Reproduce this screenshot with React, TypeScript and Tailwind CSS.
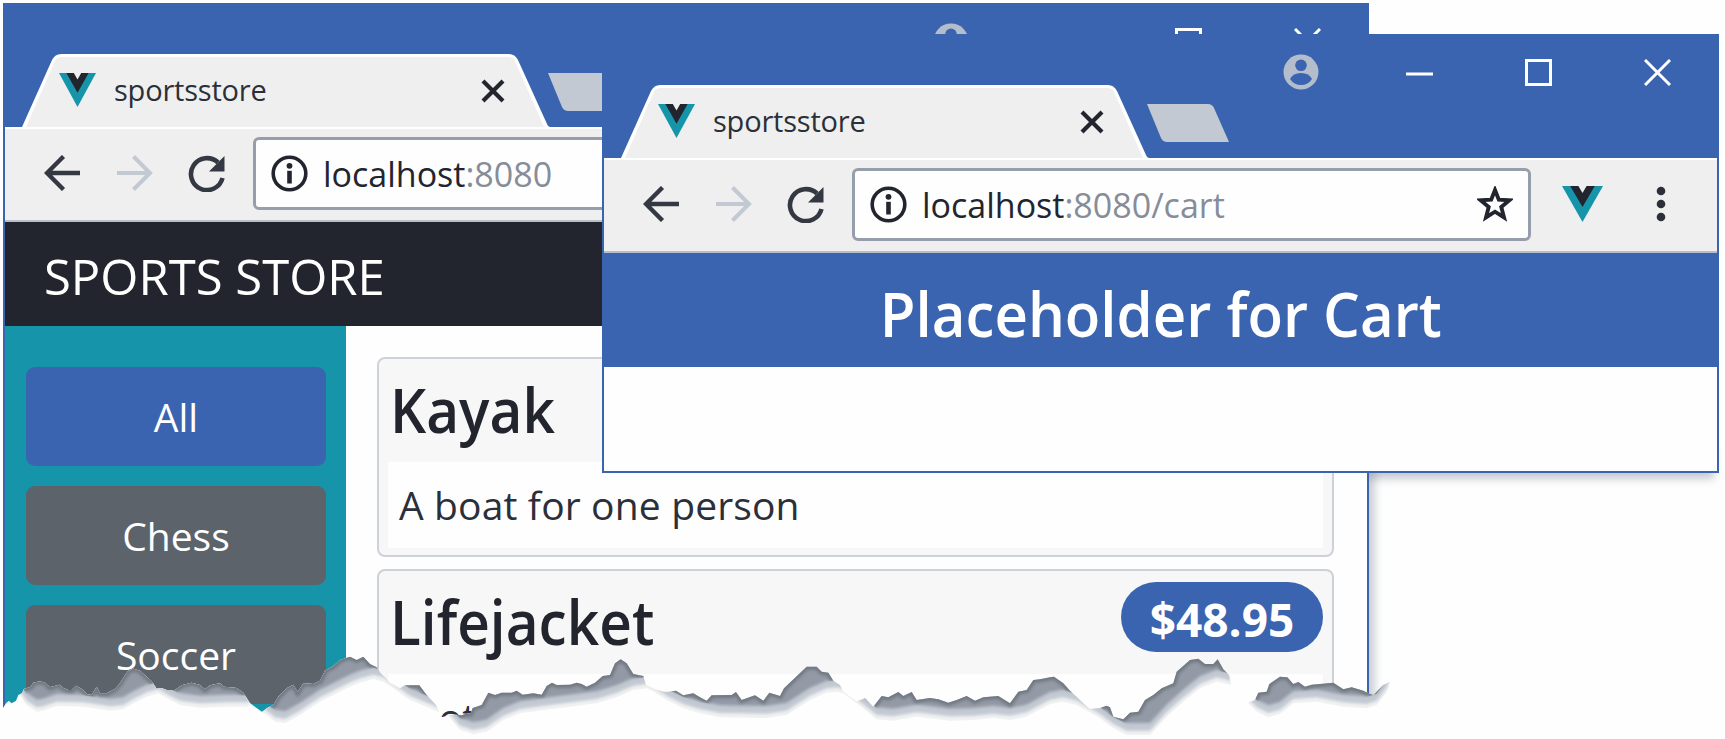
import type { ReactNode } from "react";

function VueLogo({ className }: { className: string }) {
  return (
    <svg viewBox="0 0 40 36" preserveAspectRatio="none" className={className}>
      <path d="M0 0H40L20 36Z" fill="#1594aa" />
      <path d="M8 0H32L20 21Z" fill="#22252e" />
      <path d="M16 0H24L20 7Z" fill="#efefef" />
    </svg>
  );
}

function CloseIcon() {
  return (
    <svg viewBox="0 0 24 24" className="h-6 w-6" stroke="#22252e" strokeWidth="4.2">
      <path d="M2 2L22 22M22 2L2 22" />
    </svg>
  );
}

function BackIcon() {
  return (
    <svg viewBox="0 0 36 36" className="h-9 w-9 shrink-0" fill="none" stroke="#343842" strokeWidth="4.4">
      <path d="M36 18H3M19.500 1.500L3 18L19.500 34.500" />
    </svg>
  );
}

function ForwardIcon() {
  return (
    <svg viewBox="0 0 36 36" className="ml-[37px] h-9 w-9 shrink-0" fill="none" stroke="#c3c9d2" strokeWidth="4">
      <path d="M0 18H33M16.500 1.500L33 18L16.500 34.500" />
    </svg>
  );
}

function ReloadIcon() {
  return (
    <svg viewBox="0 0 37 37" className="ml-[35px] h-[37px] w-[37px] shrink-0" fill="none">
      <path d="M34.500 23A16 16 0 1 1 30 7.500" stroke="#343842" strokeWidth="4.600" />
      <path d="M36.500 1V16.500H21Z" fill="#343842" />
    </svg>
  );
}

function InfoIcon() {
  return (
    <svg viewBox="0 0 37 37" className="h-[37px] w-[37px] shrink-0">
      <circle cx="18.500" cy="18.500" r="16.300" fill="none" stroke="#22252e" strokeWidth="3.600" />
      <circle cx="18.500" cy="10.800" r="2.900" fill="#22252e" />
      <path d="M18.500 15.800V28.500" stroke="#22252e" strokeWidth="4.600" />
    </svg>
  );
}

function WindowButtons() {
  return (
    <div className="ml-auto mr-[46px] flex h-[72px] items-center">
      <svg viewBox="0 0 36 36" className="h-9 w-9">
        <circle cx="18" cy="18" r="17.500" fill="#b4bdcb" />
        <circle cx="18" cy="11.300" r="5.800" fill="#3a64b0" />
        <path d="M7 25Q10 19 18 19T29 25Q25 31 18 31T7 25Z" fill="#3a64b0" />
      </svg>
      <svg viewBox="0 0 27 27" className="ml-[87px] h-[27px] w-[27px]">
        <path d="M0 15H27" stroke="#fff" strokeWidth="3" />
      </svg>
      <svg viewBox="0 0 27 27" className="ml-[92px] h-[27px] w-[27px]">
        <rect x="1.500" y="1.500" width="24" height="24" fill="none" stroke="#fff" strokeWidth="3" />
      </svg>
      <svg viewBox="0 0 27 27" className="ml-[92px] h-[27px] w-[27px]">
        <path d="M1 1L26 26M26 1L1 26" stroke="#fff" strokeWidth="3" />
      </svg>
    </div>
  );
}

function TitleBar() {
  return (
    <div className="flex h-[122px] shrink-0 bg-[#3a64b0]">
      <div className="relative ml-[17px] mt-[49px] flex h-[73px] w-[528px] shrink-0 items-center">
        <svg viewBox="0 0 528 73" className="absolute inset-0 h-full w-full">
          <path d="M0 73L30 6Q33 0 39 0H487Q493 0 496 6L525 70Q526 73 528 73Z" fill="#fff" />
          <path d="M4 73L33 7Q35 3 40 3H486Q491 3 493 7L522 73Z" fill="#efefef" />
        </svg>
        <VueLogo className="relative mb-0.5 ml-[37px] h-[34px] w-[37px]" />
        <span className="relative mb-[3px] ml-[18px] text-[29px] leading-none tracking-[-0.2px] text-[#2b2f39]">
          sportsstore
        </span>
        <div className="relative ml-auto mr-[45px]">
          <CloseIcon />
        </div>
      </div>
      <svg viewBox="0 0 82 38" className="-ml-0.5 mt-[68px] h-[38px] w-[82px] shrink-0">
        <path d="M0 0H61Q65 0 67 4L82 38H20Q16 38 14 34Z" fill="#c3c9d2" />
      </svg>
      <WindowButtons />
    </div>
  );
}

function Toolbar({ path, full }: { path: string; full?: boolean }) {
  return (
    <div className="flex h-[95px] shrink-0 items-center border-b-2 border-t-2 border-b-[#b9bfc9] border-t-white bg-[#efefef] pb-[3px] pl-[39px]">
      <BackIcon />
      <ForwardIcon />
      <ReloadIcon />
      <div className="ml-[28px] flex h-[73px] flex-1 items-center rounded-md border-[3px] border-[#979eab] bg-[#fefefe] px-[15px]">
        <InfoIcon />
        <span className="ml-[15px] pt-0.5 text-[34px] leading-none text-[#868d99]">
          <span className="text-[#22252e]">localhost</span>
          {path}
        </span>
        {full && (
          <svg viewBox="0 0 36 36" className="ml-auto h-9 w-9">
            <path
              d="M18 4L21.800 13.600L32.500 14.200L24.300 21L27 31.500L18 25.700L9 31.500L11.700 21L3.500 14.200L14.200 13.600Z"
              fill="none"
              stroke="#22252e"
              strokeWidth="3.900"
            />
          </svg>
        )}
      </div>
      {full && (
        <>
          <VueLogo className="ml-[31px] h-9 w-[41px]" />
          <svg viewBox="0 0 10 36" className="ml-[53px] mr-[51px] h-9 w-[10px]" fill="#2b2f39">
            <circle cx="5" cy="5" r="4.300" />
            <circle cx="5" cy="18" r="4.300" />
            <circle cx="5" cy="31" r="4.300" />
          </svg>
        </>
      )}
    </div>
  );
}

function CategoryButton({ label, active }: { label: string; active?: boolean }) {
  return (
    <button
      className={`h-[99px] shrink-0 rounded-[9px] text-[39px] leading-none text-white ${
        active ? "bg-[#3a64b0]" : "bg-[#5c636b]"
      }`}
    >
      {label}
    </button>
  );
}

function ProductCard({ name, price, children }: { name: string; price?: string; children: ReactNode }) {
  return (
    <div className="h-[200px] shrink-0 rounded-lg border-2 border-[#cdd1d8] bg-[#f7f7f7] px-[9px]">
      <div className="flex h-[103px] items-start justify-between pl-[2px]">
        <h4 className="mt-[16px] origin-left scale-x-[0.93] text-[61px] font-semibold leading-[70px] text-[#22252e]">
          {name}
        </h4>
        {price && (
          <span className="mt-[11px] flex h-[70px] w-[202px] items-center justify-center rounded-full bg-[#3a64b0] pt-1 text-[46px] font-bold text-white">
            {price}
          </span>
        )}
      </div>
      <div className="flex h-[86px] items-center bg-[#fefefe] pl-[11px] text-[39px] tracking-[0.15px] text-[#2b2f39]">
        {children}
      </div>
    </div>
  );
}

const TEAR =
  "9,204 18,190 27,182 34,190 42,186 48,182 55,165 66,160 72,147 92,140 100,128 120,124 135,128 150,142 178,134 190,144 205,150 215,150 228,137 245,147 262,163 275,165 290,140 300,160 320,160 345,147 360,130 372,110 385,92 400,86 420,92 435,106 455,124 470,146 484,144 500,150 525,150 545,136 575,128 598,134 615,148 630,136 660,130 672,140 710,144 730,158 750,190 786,216 800,205 820,195 835,170 860,145 880,134 893,156 910,130 940,132 960,122 975,92 1000,78 1020,60 1050,50 1070,60 1090,50 1110,72 1130,82 1142,100 1158,115 1170,128 1200,145 1215,136 1258,136 1280,165 1308,195 1325,232 1338,228 1350,224 1365,224 1385,226 1396,222 1412,220 1418,204 1445,195 1465,158 1485,165 1505,158 1535,158 1550,152 1568,164 1600,160 1625,164 1640,138 1656,128 1670,135 1710,134 1730,128 1745,132 1760,140 1785,128 1808,108 1830,105 1845,70 1862,58 1880,70 1900,102 1930,108 1938,135 1962,146 1990,155 2005,155 2028,152 2050,166 2080,160 2100,172 2120,182 2135,166 2195,165 2208,156 2225,180 2265,166 2290,182 2308,158 2340,168 2352,145 2420,80 2450,80 2465,95 2485,98 2500,122 2520,135 2530,155 2570,184 2595,175 2620,200 2645,168 2665,172 2695,156 2710,168 2735,156 2750,180 2790,174 2815,178 2845,188 2870,180 2900,168 2925,182 2950,172 2995,168 3030,190 3055,155 3080,150 3100,120 3120,118 3150,112 3162,110 3190,130 3210,152 3230,170 3250,190 3270,207 3300,204 3320,197 3330,202 3340,230 3370,238 3390,218 3415,215 3435,180 3460,165 3485,145 3520,130 3530,95 3570,60 3595,56 3615,72 3640,72 3653,58 3670,88 3687,105 3693,130 3743,188 3765,180 3775,158 3800,155 3808,132 3840,110 3862,112 3880,132 3895,126 3915,140 3935,134 4000,128 4030,148 4055,142 4090,152 4102,158 4120,165 4150,135 4170,125";

const SHADOW =
  "62,0 60,165 80,195 110,215 130,212 170,198 250,200 330,212 370,208 400,190 440,170 475,160 500,175 540,195 600,203 680,200 740,200 752,195 786,216 800,225 825,245 855,250 900,225 960,185 1050,140 1080,128 1120,117 1150,125 1180,145 1230,180 1290,205 1320,218 1345,228 1380,270 1420,283 1460,275 1510,240 1560,220 1650,208 1790,190 1850,172 1900,150 1940,145 1962,155 2000,180 2050,205 2100,220 2160,232 2230,233 2300,234 2360,225 2430,180 2480,158 2510,155 2530,160 2570,190 2630,238 2680,242 2750,230 2850,242 2920,240 2980,234 3030,240 3080,230 3150,192 3190,185 3230,195 3300,235 3340,265 3380,285 3450,285 3500,230 3550,185 3600,145 3650,125 3693,135 3695,0 3740,0 3745,190 3770,215 3805,232 3840,222 3880,190 3950,185 4030,200 4100,205 4130,195 4160,155 4170,125 4170,0";

function TornEdge() {
  return (
    <svg viewBox="0 0 5175 297" className="absolute left-0 top-[640px] z-30 h-[99px] w-[1725px]">
      <defs>
        <clipPath id="paper">
          <polygon points={`${TEAR} 4170,300 9,300`} />
        </clipPath>
        <clipPath id="core">
          <polygon points={SHADOW} transform="translate(0 -34)" />
        </clipPath>
        <filter id="soft" x="-5%" y="-20%" width="110%" height="140%">
          <feGaussianBlur stdDeviation="5" />
        </filter>
      </defs>
      <polygon points={`0,204 ${TEAR} 4200,125 4200,300 0,300`} fill="#fefefe" />
      <g clipPath="url(#paper)">
        <polygon points={SHADOW} fill="#f0f1f2" />
        <g filter="url(#soft)">
          <polygon points={SHADOW} fill="#c3c9d2" transform="translate(0 -13)" />
          <polygon points={SHADOW} fill="#939aa6" transform="translate(0 -36)" />
        </g>
        <g clipPath="url(#core)">
          <polyline points={TEAR} fill="none" stroke="#5c636b" strokeWidth="18" opacity="0.6" filter="url(#soft)" />
        </g>
      </g>
    </svg>
  );
}

export default function App() {
  return (
    <div className="relative h-[739px] w-[1725px] overflow-hidden bg-[#fefefe] font-['Open_Sans','Noto_Sans',sans-serif]">
      <div className="absolute left-[1340px] top-[440px] h-[32px] w-[374px] shadow-[0_7px_8px_rgba(130,140,155,0.45)]" />
      <div className="absolute left-[1340px] top-[460px] h-[279px] w-[29px] shadow-[6px_0_8px_rgba(130,140,155,0.4)]" />

      <section className="absolute left-[3px] top-[3px] z-10 flex h-[736px] w-[1366px] flex-col border-2 border-[#3a64b0] bg-[#fefefe]">
        <TitleBar />
        <Toolbar path=":8080" />
        <header className="flex h-[104px] shrink-0 items-center bg-[#22252e] pl-[39px] pt-1.5 text-[49px] text-white">
          SPORTS STORE
        </header>
        <div className="flex min-h-0 flex-1">
          <aside className="flex w-[341px] shrink-0 flex-col gap-5 bg-[#1594aa] pl-[21px] pr-[20px] pt-[41px]">
            <CategoryButton label="All" active />
            <CategoryButton label="Chess" />
            <CategoryButton label="Soccer" />
          </aside>
          <main className="flex flex-1 flex-col gap-3 pl-[31px] pr-[33px] pt-[31px]">
            <ProductCard name="Kayak">A boat for one person</ProductCard>
            <ProductCard name="Lifejacket" price="$48.95">
              Protective and fashionable
            </ProductCard>
          </main>
        </div>
      </section>

      <section className="absolute left-[602px] top-[34px] z-20 flex h-[439px] w-[1117px] flex-col border-2 border-[#3a64b0] bg-[#fefefe]">
        <TitleBar />
        <Toolbar path=":8080/cart" full />
        <h2 className="flex h-[114px] shrink-0 items-center justify-center bg-[#3a64b0] pt-2 text-[61px] font-semibold text-white">
          <span className="scale-x-[0.953]">Placeholder for Cart</span>
        </h2>
      </section>

      <TornEdge />
    </div>
  );
}
